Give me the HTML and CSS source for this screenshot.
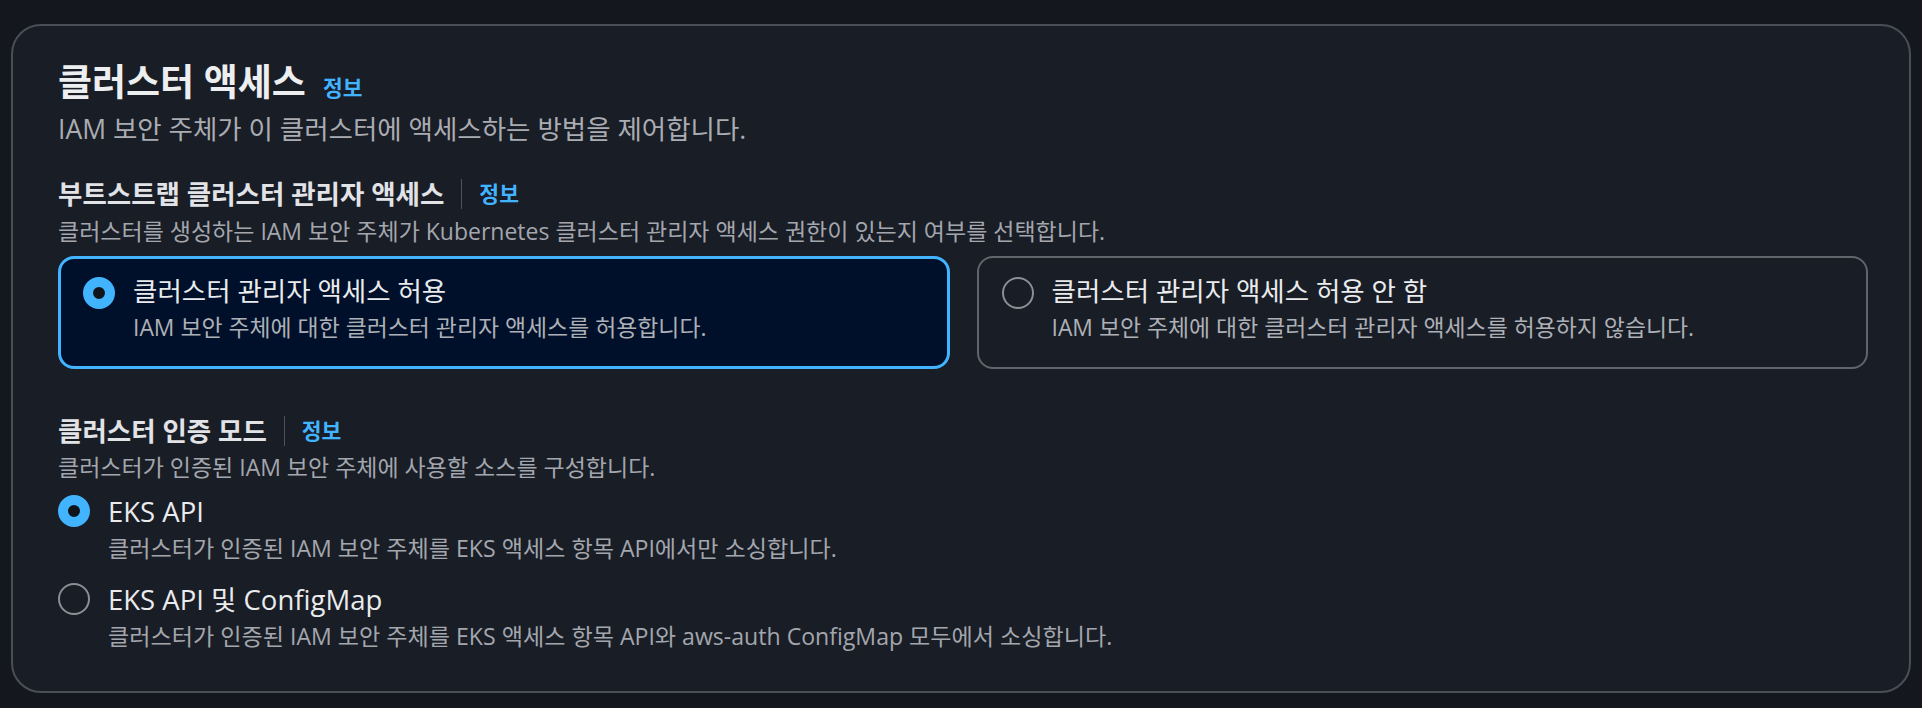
FILE: index.html
```html
<!DOCTYPE html>
<html lang="ko">
<head>
<meta charset="utf-8">
<title>클러스터 액세스</title>
<link rel="stylesheet" href="styles.css">
</head>
<body>
<div class="page">
  <section class="card">
    <header class="card-header">
      <h2 class="title">클러스터 액세스<a class="info info-title" href="#">정보</a></h2>
      <p class="subtitle">IAM 보안 주체가 이 클러스터에 액세스하는 방법을 제어합니다.</p>
    </header>

    <div class="field field-bootstrap">
      <div class="label-row">
        <span class="field-label">부트스트랩 클러스터 관리자 액세스</span>
        <span class="divider"></span>
        <a class="info" href="#">정보</a>
      </div>
      <p class="desc">클러스터를 생성하는 IAM 보안 주체가 Kubernetes 클러스터 관리자 액세스 권한이 있는지 여부를 선택합니다.</p>
      <div class="tiles">
        <div class="tile selected">
          <span class="radio checked"></span>
          <div class="option-text">
            <div class="option-label">클러스터 관리자 액세스 허용</div>
            <div class="option-desc">IAM 보안 주체에 대한 클러스터 관리자 액세스를 허용합니다.</div>
          </div>
        </div>
        <div class="tile">
          <span class="radio"></span>
          <div class="option-text">
            <div class="option-label">클러스터 관리자 액세스 허용 안 함</div>
            <div class="option-desc">IAM 보안 주체에 대한 클러스터 관리자 액세스를 허용하지 않습니다.</div>
          </div>
        </div>
      </div>
    </div>

    <div class="field field-auth">
      <div class="label-row">
        <span class="field-label">클러스터 인증 모드</span>
        <span class="divider"></span>
        <a class="info" href="#">정보</a>
      </div>
      <p class="desc">클러스터가 인증된 IAM 보안 주체에 사용할 소스를 구성합니다.</p>
      <div class="radio-group">
        <div class="radio-row">
          <span class="radio checked"></span>
          <div class="option-text">
            <div class="option-label">EKS API</div>
            <div class="option-desc">클러스터가 인증된 IAM 보안 주체를 EKS 액세스 항목 API에서만 소싱합니다.</div>
          </div>
        </div>
        <div class="radio-row">
          <span class="radio"></span>
          <div class="option-text">
            <div class="option-label">EKS API 및 ConfigMap</div>
            <div class="option-desc">클러스터가 인증된 IAM 보안 주체를 EKS 액세스 항목 API와 aws-auth ConfigMap 모두에서 소싱합니다.</div>
          </div>
        </div>
      </div>
    </div>
  </section>
</div>
</body>
</html>
```

FILE: styles.css
```css
html, body {
  margin: 0;
  padding: 0;
  background: #14171e;
}

body {
  font-family: "Open Sans", "Noto Sans CJK KR", sans-serif;
  color: #e9ebed;
}

.page {
  padding: 24px 11px 18px 11px;
  background: #14171e;
}

.card {
  background: #191d26;
  border: 2px solid #4b4e57;
  border-radius: 30px;
  padding: 34px 41px 40px 45px;
}

.title {
  margin: 0;
  font-size: 37px;
  line-height: 44px;
  font-weight: 700;
  color: #eceef0;
}

.info {
  color: #42b4ff;
  font-size: 21.5px;
  font-weight: 700;
  text-decoration: none;
}

.info-title {
  margin-left: 17px;
  line-height: 1;
}

.subtitle {
  margin: 8px 0 0;
  font-size: 26.5px;
  line-height: 34px;
  color: #a9acb2;
}

.field-bootstrap {
  margin-top: 31px;
}

.field-auth {
  margin-top: 45px;
}

.label-row {
  display: flex;
  align-items: center;
  gap: 17px;
  height: 34px;
}

.field-label {
  font-size: 26.5px;
  line-height: 34px;
  font-weight: 700;
  color: #e2e3e6;
}

.divider {
  width: 1px;
  height: 30px;
  background: #4f525a;
}

.label-row .info {
  line-height: 34px;
}

.desc {
  margin: 5px 0 0;
  font-size: 23px;
  line-height: 30px;
  color: #a3a6ad;
}

.field-auth .desc {
  margin-top: 4px;
}

.tiles {
  margin-top: 10px;
  display: grid;
  grid-template-columns: 1fr 1fr;
  gap: 27px;
}

.tile {
  display: flex;
  gap: 18px;
  border: 2px solid #62646b;
  border-radius: 16px;
  padding: 16px 24px 24px 24px;
}

.tile.selected {
  border: 3px solid #42b4ff;
  background: #00102a;
  padding: 15px 23px 23px 23px;
}

.radio {
  flex: none;
  box-sizing: border-box;
  width: 32px;
  height: 32px;
  border-radius: 50%;
  border: 2px solid #8c8e95;
  margin-top: 3px;
}

.radio.checked {
  border: 10.5px solid #42b4ff;
  background: #0f141a;
}

.tile .radio {
  margin-left: -1px;
}

.option-text {
  display: flex;
  flex-direction: column;
  gap: 5px;
}

.option-label {
  font-size: 26.5px;
  line-height: 34px;
  color: #e9ebed;
}

.option-desc {
  font-size: 22.9px;
  line-height: 30px;
  color: #adb0b6;
}

.radio-group {
  margin-top: 13px;
  display: flex;
  flex-direction: column;
  gap: 20px;
}

.radio-row {
  display: flex;
  gap: 18px;
}

.radio-row .radio {
  margin-top: 0;
}

.radio-row .option-label {
  font-size: 27.5px;
}

.radio-row .option-text {
  gap: 4px;
}

.radio-row .option-desc {
  font-size: 23.1px;
  color: #a3a6ad;
}
```
